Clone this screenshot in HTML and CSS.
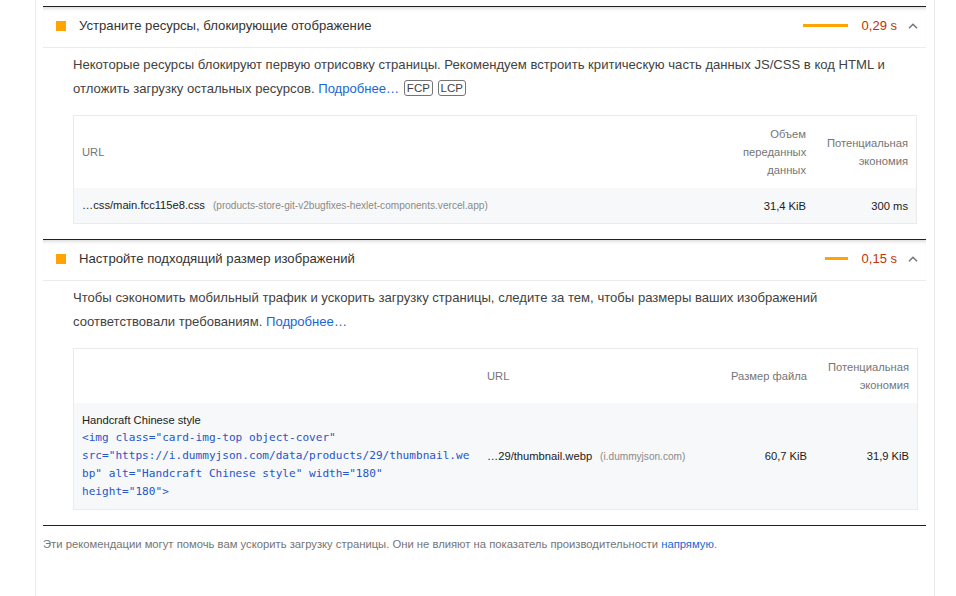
FILE: index.html
```html
<!DOCTYPE html>
<html lang="ru">
<head>
<meta charset="utf-8">
<link rel="stylesheet" href="styles.css">
</head>
<body>
<div class="page">
  <section class="audit">
    <div class="summary">
      <span class="icon"></span>
      <span class="title">Устраните ресурсы, блокирующие отображение</span>
      <span class="bar bar-long"></span>
      <span class="value">0,29 s</span>
      <svg class="chevron" width="10" height="6" viewBox="0 0 10 6"><polyline points="1,5.2 5,1.2 9,5.2" fill="none" stroke="#757575" stroke-width="1.5"/></svg>
    </div>
    <div class="details">
      <p class="desc">Некоторые ресурсы блокируют первую отрисовку страницы. Рекомендуем встроить критическую часть данных JS/CSS в код HTML и отложить загрузку остальных ресурсов. <a class="link">Подробнее…</a> <span class="badge">FCP</span> <span class="badge">LCP</span></p>
      <table class="tbl">
        <thead>
          <tr>
            <th class="left">URL</th>
            <th class="right w-size1">Объем<br>переданных<br>данных</th>
            <th class="right w-save">Потенциальная<br>экономия</th>
          </tr>
        </thead>
        <tbody>
          <tr class="row">
            <td class="left"><span class="url">…css/main.fcc115e8.css</span><span class="host">(products-store-git-v2bugfixes-hexlet-components.vercel.app)</span></td>
            <td class="right">31,4 KiB</td>
            <td class="right">300 ms</td>
          </tr>
        </tbody>
      </table>
    </div>
  </section>

  <section class="audit">
    <div class="summary">
      <span class="icon"></span>
      <span class="title">Настройте подходящий размер изображений</span>
      <span class="bar bar-short"></span>
      <span class="value">0,15 s</span>
      <svg class="chevron" width="10" height="6" viewBox="0 0 10 6"><polyline points="1,5.2 5,1.2 9,5.2" fill="none" stroke="#757575" stroke-width="1.5"/></svg>
    </div>
    <div class="details">
      <p class="desc">Чтобы сэкономить мобильный трафик и ускорить загрузку страницы, следите за тем, чтобы размеры ваших изображений соответствовали требованиям. <a class="link">Подробнее…</a></p>
      <table class="tbl">
        <thead>
          <tr>
            <th class="left w-el"></th>
            <th class="left w-url">URL</th>
            <th class="right w-size2">Размер файла</th>
            <th class="right w-save">Потенциальная<br>экономия</th>
          </tr>
        </thead>
        <tbody>
          <tr class="row">
            <td class="left">
              <div class="node-label">Handcraft Chinese style</div>
              <div class="snippet">&lt;img class="card-img-top object-cover"<br>src="https://i.dummyjson.com/data/products/29/thumbnail.we<br>bp" alt="Handcraft Chinese style" width="180"<br>height="180"&gt;</div>
            </td>
            <td class="left"><span class="url">…29/thumbnail.webp</span><span class="host">(i.dummyjson.com)</span></td>
            <td class="right">60,7 KiB</td>
            <td class="right">31,9 KiB</td>
          </tr>
        </tbody>
      </table>
    </div>
  </section>

  <p class="footer">Эти рекомендации могут помочь вам ускорить загрузку страницы. Они не влияют на показатель производительности <a class="link">напрямую</a>.</p>
</div>
</body>
</html>
```

FILE: styles.css
```css
html, body {
  margin: 0;
  padding: 0;
  background: #fff;
}

body {
  font-family: "Liberation Sans", Arial, sans-serif;
  color: #212121;
}

.page {
  box-sizing: border-box;
  margin-left: 35px;
  width: 900px;
  min-height: 100vh;
  padding: 6px 8px 0 7px;
  border-left: 1px solid #ebebeb;
  border-right: 1px solid #ebebeb;
}

.audit {
  border-top: 1px solid #202124;
  padding-bottom: 15px;
}

.summary {
  display: flex;
  align-items: center;
  height: 40px;
  padding: 0 8px 0 13px;
  border-bottom: 1px solid #ebebeb;
  box-shadow: inset 0 4px 4px -3px rgba(0, 0, 0, 0.18);
}

.icon {
  width: 10px;
  height: 10px;
  background: #ffa400;
  flex: none;
  margin-top: -2px;
}

.title {
  margin-left: 13px;
  font-size: 13.15px;
  color: #333;
  flex: 1;
  margin-top: -3px;
}

.bar {
  height: 3px;
  background: #ffa400;
  margin-top: -3px;
}

.bar-long { width: 45px; }
.bar-short { width: 23px; }

.value {
  margin-left: 14px;
  font-size: 13px;
  color: #c33300;
  margin-top: -3px;
}

.chevron {
  margin-left: 11px;
  margin-top: -3px;
}

.details {
  padding: 5px 9px 0 30px;
}

.desc {
  margin: 0 0 14px;
  font-size: 13.1px;
  line-height: 24px;
  color: #424242;
}

.link {
  color: #1967d2;
  text-decoration: none;
}

.badge {
  display: inline-block;
  border: 1px solid #757575;
  border-radius: 3px;
  padding: 0 2px;
  font-size: 11.5px;
  line-height: 14px;
  color: #424242;
  margin-left: 1px;
  vertical-align: 1px;
}

.tbl {
  width: 100%;
  table-layout: fixed;
  border-collapse: collapse;
  border: 1px solid #ebebeb;
  font-size: 11.2px;
  line-height: 18px;
}

.tbl th {
  font-weight: normal;
  color: #757575;
  padding: 9px 8px;
  vertical-align: middle;
}

.tbl td {
  padding: 8px;
  vertical-align: middle;
  color: #212121;
}

.row {
  background: #f7f8f9;
}

.left { text-align: left; }
.right { text-align: right; }

.w-size1 { width: 63px; }
.w-save { width: 86px; }
.w-el { width: 389px; }
.w-url { width: 228px; }
.w-size2 { width: 76px; white-space: nowrap; }

.url {
  color: #212121;
}

.host {
  margin-left: 8px;
  font-size: 10.1px;
  color: #8a8a8a;
}

.node-label {
  color: #212121;
}

.snippet {
  font-family: "DejaVu Sans Mono", "Liberation Mono", monospace;
  font-size: 11.1px;
  color: #2855c8;
}

.footer {
  margin: 0;
  border-top: 1px solid #202124;
  padding-top: 9px;
  font-size: 11.25px;
  line-height: 18px;
  color: #757575;
}
```
